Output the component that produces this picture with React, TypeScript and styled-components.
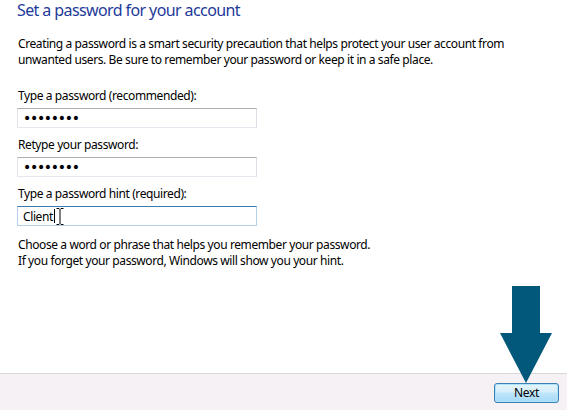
import styled, { createGlobalStyle } from 'styled-components';

const GlobalStyle = createGlobalStyle`
  html, body {
    margin: 0;
    padding: 0;
    background: #ffffff;
  }
  body {
    width: 567px;
    height: 410px;
    overflow: hidden;
    font-family: "Noto Sans", "Open Sans", sans-serif;
  }
`;

const Page = styled.div`
  position: relative;
  display: flex;
  flex-direction: column;
  width: 567px;
  height: 410px;
  background: #ffffff;
`;

const Content = styled.div`
  flex: 1;
  display: flex;
  flex-direction: column;
  padding: 0 16px 0 17px;
`;

const Title = styled.h1`
  margin: 0;
  height: 20px;
  font-size: 16px;
  font-weight: 400;
  line-height: 20px;
  letter-spacing: -0.6px;
  color: #1e3a9a;
`;

const Text = styled.p<{ $top: number }>`
  margin: ${(p) => p.$top}px 0 0 1px;
  font-size: 12px;
  line-height: 16px;
  letter-spacing: -0.4px;
  color: #000000;
`;

const Fields = styled.div`
  display: flex;
  flex-direction: column;
  gap: 9px;
  margin-top: 20px;
`;

const Field = styled.div`
  display: flex;
  flex-direction: column;
  gap: 5px;
`;

const Label = styled.label`
  margin-left: 1px;
  height: 15px;
  font-size: 12px;
  line-height: 15px;
  letter-spacing: -0.4px;
  color: #000000;
`;

const Box = styled.div<{ $focused?: boolean }>`
  position: relative;
  display: flex;
  align-items: center;
  box-sizing: border-box;
  width: 240px;
  height: 20px;
  padding: 0 5px;
  border: 1px solid;
  border-color: ${(p) =>
    p.$focused ? '#3d7bad #b5cfe7 #b5cfe7 #b5cfe7' : '#abadb3 #dbdfe6 #e3e9ef #e2e3ea'};
  background: #ffffff;
  font-size: 12px;
  letter-spacing: -0.4px;
  color: #000000;
`;

const Dots = styled.span`
  font-family: "DejaVu Sans", sans-serif;
  font-size: 14px;
  letter-spacing: -1.3px;
  line-height: 18px;
`;

const Caret = styled.span`
  display: inline-block;
  width: 1px;
  height: 14px;
  margin-left: 1px;
  background: #000000;
`;

const IBeam = styled.svg`
  position: absolute;
  left: 38px;
  top: 1px;
`;

const Footer = styled.div`
  display: flex;
  justify-content: flex-end;
  align-items: flex-start;
  height: 37px;
  padding: 9px 8px 0 0;
  box-sizing: border-box;
  border-top: 1px solid #d8d8d8;
  background: #f5f1f5;
`;

const Button = styled.button`
  width: 65px;
  height: 20px;
  padding: 0;
  border: 1px solid #3c7fb1;
  border-radius: 3px;
  background: linear-gradient(to bottom, #e5f4fc 0%, #d4eefb 45%, #bee6fd 50%, #a7d9f5 100%);
  box-shadow: inset 0 0 0 1px #aee3fd;
  font-family: "Noto Sans", "Open Sans", sans-serif;
  font-size: 12px;
  line-height: 16px;
  letter-spacing: -0.3px;
  color: #000000;
`;

const Arrow = styled.svg`
  position: absolute;
  left: 499px;
  top: 285px;
`;

export default function App() {
  return (
    <Page>
      <GlobalStyle />
      <Content>
        <Title>Set a password for your account</Title>
        <Text $top={16}>
          Creating a password is a smart security precaution that helps protect your user account from
          <br />
          unwanted users. Be sure to remember your password or keep it in a safe place.
        </Text>
        <Fields>
          <Field>
            <Label>Type a password (recommended):</Label>
            <Box>
              <Dots>••••••••</Dots>
            </Box>
          </Field>
          <Field>
            <Label>Retype your password:</Label>
            <Box>
              <Dots>••••••••</Dots>
            </Box>
          </Field>
          <Field>
            <Label>Type a password hint (required):</Label>
            <Box $focused>
              Client
              <Caret />
              <IBeam width="8" height="17" viewBox="0 0 8 17">
                <path d="M0.5 0.5h2.5l1 1 1-1h2.5M4 1.5v14M0.5 16.5h2.5l1-1 1 1h2.5" fill="none" stroke="#000" strokeWidth="1" />
              </IBeam>
            </Box>
          </Field>
        </Fields>
        <Text $top={11}>
          Choose a word or phrase that helps you remember your password.
          <br />
          If you forget your password, Windows will show you your hint.
        </Text>
      </Content>
      <Footer>
        <Button>Next</Button>
      </Footer>
      <Arrow width="54" height="99" viewBox="0 0 54 99">
        <path d="M13 1h28v47h12L27 98 1 48h12z" fill="#02587a" />
      </Arrow>
    </Page>
  );
}
